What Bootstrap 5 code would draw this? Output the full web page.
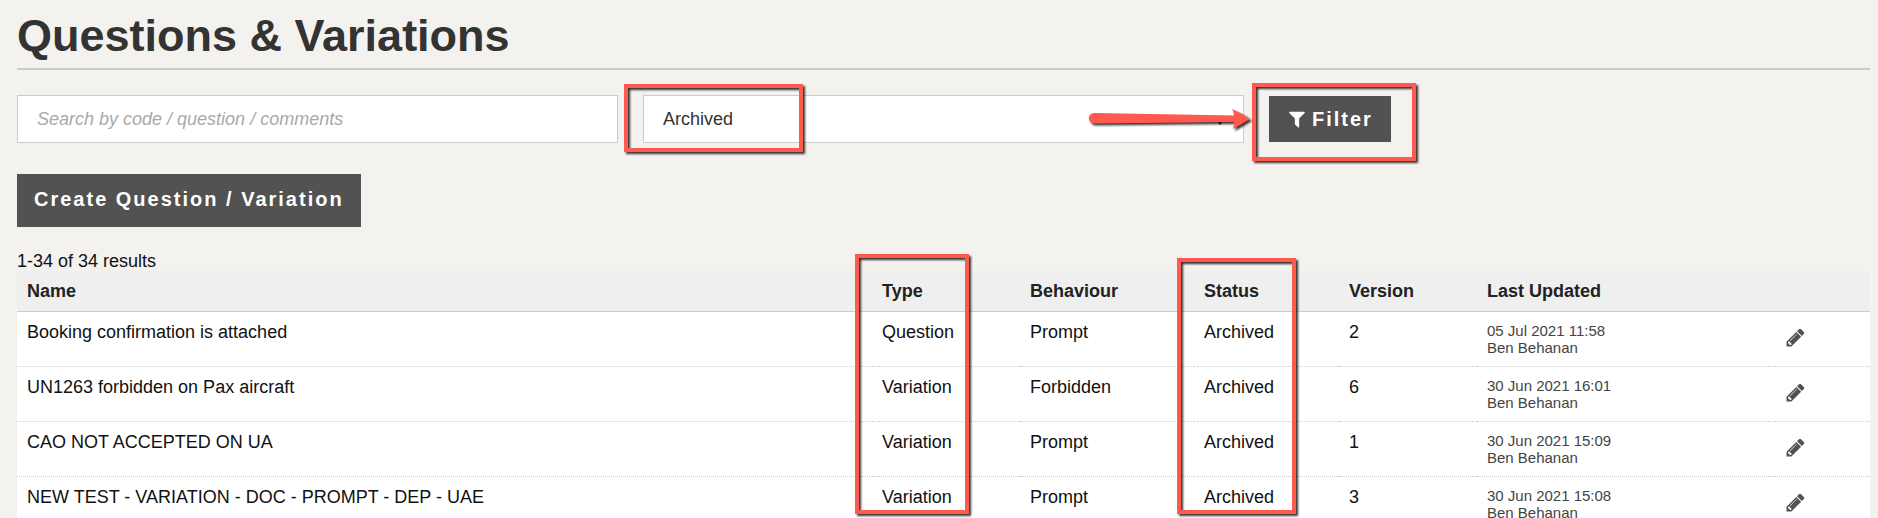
<!DOCTYPE html>
<html lang="en">
<head>
<meta charset="utf-8">
<meta name="viewport" content="width=device-width, initial-scale=1">
<title>Questions &amp; Variations</title>
<link href="https://cdn.jsdelivr.net/npm/bootstrap@5.3.0/dist/css/bootstrap.min.css" rel="stylesheet">
<style>
  body { background: #f3f2ee; color: #111; font-family: "Liberation Sans", Arial, sans-serif; font-size: 18px; line-height: 24px; }
  .page { padding: 9px 8px 0 17px; }
  .page-title { color: #333; font-size: 45px; line-height: 54px; font-weight: 700; padding-bottom: 5px; border-bottom: 2px solid #ccc; margin-bottom: 25px; }
  .filters { display: grid; grid-template-columns: repeat(3, 1fr); gap: 25px; margin-bottom: 31px; }
  .filters .form-control, .filters .form-select { height: 48px; border: 1px solid #ccc; border-radius: 0; padding: 0 19px; font-size: 18px; color: #333; background-color: #fff; }
  .filters .form-control::placeholder { color: #a9a9a9; font-style: italic; opacity: 1; }
  .filters .form-select { background-image: url("data:image/svg+xml,%3csvg xmlns='http://www.w3.org/2000/svg' viewBox='0 0 8 5'%3e%3cpath d='M0 0h8L4 5z' fill='%23222'/%3e%3c/svg%3e"); background-size: 8px 5px; background-position: right 19px top 24px; }
  .btn-dark-flat { background: #525252; color: #fff; border: 0; border-radius: 0; font-size: 20px; font-weight: 700; letter-spacing: 2px; line-height: 24px; }
  .btn-dark-flat:hover { background: #3d3d3d; color: #fff; }
  .btn-filter { padding: 11px 18px; gap: 5px; }
  .btn-create { padding: 13px 17px 16px; margin-bottom: 24px; }
  .result-count { line-height: 20px; }
  .results { --bs-table-bg: #fff; --bs-table-color: #111; table-layout: fixed; }
  .results th, .results td { padding: 8px 10px; }
  .results thead th { background: #efefef; color: #222; border-bottom: 1px solid #ccc; position: relative; }
  .results tbody td { border-bottom: 1px dotted #ccc; }
  .results .updated { color: #444; font-size: 15px; line-height: 17px; padding-top: 10px; padding-bottom: 10px; }
  .results .actions { padding-top: 10px; }
  .edit-link { color: #525252; }
  .mark-frame { position: absolute; border: 4px solid #ff5a4d; filter: drop-shadow(2px 2px 1px rgba(0,0,0,.8)); pointer-events: none; z-index: 2; }
  .frame-select { left: -19px; top: -11px; width: 179px; height: 68px; }
  .frame-filter { left: -17px; top: -13px; width: 164px; height: 78px; }
  .frame-type { left: -17px; top: -17px; width: 114px; height: 260px; }
  .frame-status { left: -17px; top: -13px; width: 119px; height: 256px; }
  .mark-arrow { position: absolute; right: -10px; top: 10px; z-index: 3; pointer-events: none; filter: drop-shadow(2px 2px 1px rgba(0,0,0,.8)); }
</style>
</head>
<body>
<svg class="d-none" aria-hidden="true">
  <symbol id="pencil" viewBox="0 0 1792 1792"><path fill="currentColor" d="M491 1536l91-91-235-235-91 91v107h128v128h107zm523-928q0-22-22-22-10 0-17 7l-542 542q-7 7-7 17 0 22 22 22 10 0 17-7l542-542q7-7 7-17zm-54-192l416 416-832 832h-416v-416zm683 96q0 53-37 90l-166 166-416-416 166-165q36-38 90-38 53 0 91 38l235 234q37 39 37 91z"/></symbol>
</svg>
<main class="page container-fluid">
  <h1 class="page-title">Questions &amp; Variations</h1>
  <form class="filters align-items-center" onsubmit="return false">
    <input class="form-control" type="text" placeholder="Search by code / question / comments" aria-label="Search">
    <div class="position-relative">
      <select class="form-select" aria-label="Status">
        <option>Active</option>
        <option selected>Archived</option>
      </select>
      <div class="mark-frame frame-select"></div>
      <svg class="mark-arrow" width="168" height="28" viewBox="0 0 168 28" aria-hidden="true"><path fill="#ff5a4d" d="M8 8L148 10.500Q148 7 146 4Q156 8 164 14Q156 19 147 24Q148 20 148 17L8 18.500A5 5 0 0 1 8 8z"/></svg>
    </div>
    <div class="position-relative d-flex">
      <button class="btn btn-dark-flat btn-filter d-flex align-items-center" type="submit">
        <svg width="20" height="20" viewBox="0 0 1792 1792" aria-hidden="true"><path fill="currentColor" d="M1595 295q17 41-14 70l-493 493v742q0 42-39 59-13 5-25 5-27 0-45-19l-256-256q-19-19-19-45v-486l-493-493q-31-29-14-70 17-39 59-39h1280q42 0 59 39z"/></svg>Filter
      </button>
      <div class="mark-frame frame-filter"></div>
    </div>
  </form>
  <button class="btn btn-dark-flat btn-create d-block" type="button">Create Question / Variation</button>
  <div class="result-count">1-34 of 34 results</div>
  <table class="table results mb-0">
    <colgroup>
      <col style="width:46.14%"><col style="width:7.99%"><col style="width:9.39%"><col style="width:7.82%"><col style="width:7.45%"><col style="width:16.08%"><col>
    </colgroup>
    <thead>
      <tr>
        <th scope="col">Name</th>
        <th scope="col">Type<div class="mark-frame frame-type"></div></th>
        <th scope="col">Behaviour</th>
        <th scope="col">Status<div class="mark-frame frame-status"></div></th>
        <th scope="col">Version</th>
        <th scope="col">Last Updated</th>
        <th></th>
      </tr>
    </thead>
    <tbody>
      <tr><td>Booking confirmation is attached</td><td>Question</td><td>Prompt</td><td>Archived</td><td>2</td><td class="updated">05 Jul 2021 11:58<br>Ben Behanan</td><td class="actions align-middle"><a class="edit-link d-inline-block" href="#" aria-label="Edit"><svg class="d-block" width="21" height="21"><use href="#pencil"/></svg></a></td></tr>
      <tr><td>UN1263 forbidden on Pax aircraft</td><td>Variation</td><td>Forbidden</td><td>Archived</td><td>6</td><td class="updated">30 Jun 2021 16:01<br>Ben Behanan</td><td class="actions align-middle"><a class="edit-link d-inline-block" href="#" aria-label="Edit"><svg class="d-block" width="21" height="21"><use href="#pencil"/></svg></a></td></tr>
      <tr><td>CAO NOT ACCEPTED ON UA</td><td>Variation</td><td>Prompt</td><td>Archived</td><td>1</td><td class="updated">30 Jun 2021 15:09<br>Ben Behanan</td><td class="actions align-middle"><a class="edit-link d-inline-block" href="#" aria-label="Edit"><svg class="d-block" width="21" height="21"><use href="#pencil"/></svg></a></td></tr>
      <tr><td>NEW TEST - VARIATION - DOC - PROMPT - DEP - UAE</td><td>Variation</td><td>Prompt</td><td>Archived</td><td>3</td><td class="updated">30 Jun 2021 15:08<br>Ben Behanan</td><td class="actions align-middle"><a class="edit-link d-inline-block" href="#" aria-label="Edit"><svg class="d-block" width="21" height="21"><use href="#pencil"/></svg></a></td></tr>
    </tbody>
  </table>
</main>
<script src="https://cdn.jsdelivr.net/npm/bootstrap@5.3.0/dist/js/bootstrap.bundle.min.js"></script>
</body>
</html>
